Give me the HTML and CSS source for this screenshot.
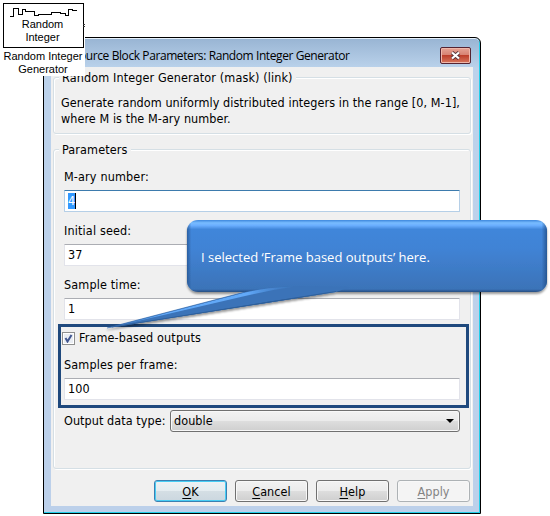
FILE: index.html
```
<!DOCTYPE html>
<html lang="en">
<head>
<meta charset="utf-8">
<title>Source Block Parameters</title>
<link rel="stylesheet" href="styles.css">
</head>
<body>
<main class="canvas">
  <section class="dialog">
    <header class="titlebar">
      <span class="title">ource Block Parameters: Random Integer Generator</span>
      <span class="close"><svg width="11" height="9" viewBox="0 0 11 9"><path d="M2 1.5 9 7.5M9 1.5 2 7.5" stroke="#53343a" stroke-width="3.8"/><path d="M2 1.5 9 7.5M9 1.5 2 7.5" stroke="#fff" stroke-width="2.2"/></svg></span>
    </header>
    <div class="client">
      <div class="group about">
        <span class="legend">Random Integer Generator (mask) (link)</span>
        <p>Generate random uniformly distributed integers in the range [0, M-1],<br>where M is the M-ary number.</p>
      </div>
      <div class="group params">
        <span class="legend">Parameters</span>
        <div class="label">M-ary number:</div>
        <div class="input focus"><span class="selected">4</span></div>
        <div class="label">Initial seed:</div>
        <div class="input">37</div>
        <div class="label">Sample time:</div>
        <div class="input">1</div>
        <div class="frame">
          <div class="check-row">
            <span class="check"><svg width="9" height="9" viewBox="0 0 9 9"><path d="M1.5 4 3.5 7.5 7.5 1" fill="none" stroke="#40558f" stroke-width="2"/></svg></span>
            <span>Frame-based outputs</span>
          </div>
          <div class="label">Samples per frame:</div>
          <div class="input">100</div>
        </div>
        <div class="type-row">
          <span class="type-label">Output data type:</span>
          <div class="select"><span>double</span><svg width="8" height="4" viewBox="0 0 8 4"><path d="M0 0H8L4 4Z"/></svg></div>
        </div>
      </div>
      <footer class="buttons">
        <div class="button default"><u>O</u>K</div>
        <div class="button"><u>C</u>ancel</div>
        <div class="button"><u>H</u>elp</div>
        <div class="button disabled"><u>A</u>pply</div>
      </footer>
    </div>
  </section>

  <aside class="block">
    <div class="icon">
      <svg width="69" height="10" viewBox="0 0 69 10"><path d="M0 8.500H3.500V.500H8.500V6.500H12.500V1.500H15.500V3.500H24.500V7.500H28.500V6.500H41.500V4.500H50.500V5.500H55V7.500H58.500V1.500H62.500V2.500H67" fill="none" stroke="#000" stroke-width="1" shape-rendering="crispEdges"/><path d="M0 8.500H4" stroke="#000"/></svg>
      <div>Random<br>Integer</div>
    </div>
    <div class="caption">Random Integer<br>Generator</div>
  </aside>
  <span class="port"></span>

  <div class="callout">
    <svg width="450" height="125" viewBox="0 0 450 125">
      <defs>
        <linearGradient id="face" x1="0" y1="0" x2="0" y2="1">
          <stop offset="0" stop-color="#3d87dc"/><stop offset=".04" stop-color="#78bcff"/><stop offset=".075" stop-color="#6aafff"/><stop offset=".13" stop-color="#4186da"/><stop offset=".4" stop-color="#4183d5"/><stop offset=".96" stop-color="#3b73b8"/><stop offset="1" stop-color="#274e82"/>
        </linearGradient>
        <linearGradient id="side" x1="0" x2="1" y1="0" y2="0">
          <stop offset="0" stop-color="#204d86" stop-opacity=".65"/><stop offset=".012" stop-color="#204d86" stop-opacity="0"/><stop offset=".985" stop-color="#204d86" stop-opacity="0"/><stop offset="1" stop-color="#204d86" stop-opacity=".8"/>
        </linearGradient>
        <linearGradient id="shine" gradientUnits="userSpaceOnUse" x1="7" y1="0" x2="194" y2="0">
          <stop offset="0" stop-color="#3f7cc2"/><stop offset=".3" stop-color="#62a9f8"/><stop offset=".75" stop-color="#62a9f8"/><stop offset="1" stop-color="#4180cc" stop-opacity=".2"/>
        </linearGradient>
        <filter id="soft" x="-5%" y="-20%" width="110%" height="140%"><feGaussianBlur stdDeviation=".5"/></filter>
        <filter id="shadow" x="-5%" y="-10%" width="110%" height="130%"><feDropShadow dx="0" dy="2" stdDeviation="1.3" flood-color="#000" flood-opacity=".4"/></filter>
      </defs>
      <g filter="url(#shadow)">
        <rect x="87" y="5" width="360" height="72" rx="11" fill="url(#face)"/>
        <rect x="87" y="5" width="360" height="72" rx="11" fill="url(#side)"/>
        <path d="M7 113 145 77 165 73 194 71 250 72 236 77Z" fill="#3b73b8"/>
        <path d="M12 112 143 78Q165 72.500 194 71.500Q170 75 145 81Z" fill="url(#shine)" filter="url(#soft)"/>
        <path d="M7 113 145 77" stroke="#3069ad" stroke-width=".7"/>
        <path d="M7 113 236 77 170 86.500Z" fill="#2b588f"/>
        <path d="M12 112 236 76.500" stroke="#2f609b" stroke-width="1"/>
      </g>
    </svg>
    <span class="message">I selected ‘Frame based outputs’ here.</span>
  </div>
</main>
</body>
</html>
```
FILE: styles.css
```
* { box-sizing: border-box; }
body { margin: 0; background: #fff; }
.canvas { position: relative; width: 550px; height: 516px; overflow: hidden; font: 12.5px/16px "DejaVu Sans Condensed", "DejaVu Sans", sans-serif; font-stretch: condensed; letter-spacing: .07px; color: #000; }
.canvas span { white-space: nowrap; }

.dialog { position: absolute; left: 43px; top: 37px; width: 438px; height: 477px; padding: 0 7px 7px; border: 1px solid #000; border-radius: 6px 6px 0 0; background: linear-gradient(#98b4d3, #b9d1ea 29px, #bcd2eb 30px, #bcd0ea); box-shadow: inset -1px -1px #22cfea, inset 0 1px #e6f1fb; }
.titlebar { height: 29px; display: flex; align-items: center; justify-content: space-between; padding: 0 2px 0 28px; }
.title { font: 12px/16px "Open Sans", sans-serif; letter-spacing: -.41px; padding-top: 6px; }
.close { width: 31px; height: 17px; display: flex; align-items: center; justify-content: center; margin-top: 6px; border: 1px solid #552331; border-radius: 2px; background: linear-gradient(#e5a395, #d88373 45%, #bd3f2b 50%, #d7775e); box-shadow: inset 0 0 0 1px #efb7aa; }
.client { height: 439px; background: #f0f0f0; padding: 10px 2px 0; }
.group { position: relative; border: 1px solid #d5dfe5; border-radius: 3px; box-shadow: inset 1px 1px #fff, 1px 1px #fff; }
.legend { position: absolute; left: 5px; top: -8px; padding: 0 3px; background: #f0f0f0; letter-spacing: .12px; }
.about { height: 57px; padding: 17px 7px 0; }
.about p { margin: 0; }
.params { height: 320px; margin-top: 15px; padding: 19px 10px 0; }
.label { height: 16px; letter-spacing: .15px; }
.input { height: 22px; margin: 5px 0 11px; padding: 2px 3px; border: 1px solid #e2e3ea; border-top-color: #abadb3; border-radius: 1px; background: #fff; }
.focus { border-color: #b5cfe7; border-top-color: #3d7bad; }
.selected { display: inline-block; height: 16px; background: #3399ff; color: #fff; border-right: 1px solid #000; }
.frame { height: 84px; margin: -7px -9px 0 -6px; padding: 3px 6px 0 1px; border: 3px solid #1f497d; }
.frame .label { margin: 11px 0 0 2px; }
.frame .input { margin: 5px 0 0 2px; }
.check-row { height: 16px; display: flex; align-items: center; gap: 4px; letter-spacing: .13px; }
.check { width: 13px; height: 13px; border: 1px solid #8e8f8f; background: #e9edf3; display: flex; align-items: center; justify-content: center; box-shadow: inset 0 0 0 1px #fff; }
.type-row { display: flex; margin-top: 2px; height: 22px; align-items: center; }
.type-label { width: 106px; }
.select { flex: 1; height: 22px; display: flex; align-items: center; justify-content: space-between; padding: 0 5px 0 3px; border: 1px solid #707070; border-radius: 3px; background: linear-gradient(#f2f2f2, #ebebeb 48%, #dddddd 52%, #cfcfcf); box-shadow: inset 0 0 0 1px #f8f8f8; }
.buttons { display: flex; gap: 8px; justify-content: flex-end; padding: 11px 1px 0; }
.button { width: 73px; height: 22px; text-align: center; line-height: 21px; border: 1px solid #707070; border-radius: 3px; background: linear-gradient(#f2f2f2, #ebebeb 48%, #dddddd 52%, #cfcfcf); box-shadow: inset 0 0 0 1px #f8f8f8; }
.button u { text-underline-offset: 2px; }
.default { border-color: #3c7fb1; background: linear-gradient(#eef2f4, #e4ecf0 48%, #d4dee4 52%, #cbd7df); box-shadow: inset 0 0 0 1px #48cdf4; }
.disabled { color: #838383; border-color: #adb2b5; background: #f4f4f4; }

.block { position: absolute; left: 0; top: 0; width: 85px; height: 76px; padding: 3px 0 0 3px; background: #fff; font: 11px/13px "Liberation Sans", sans-serif; letter-spacing: 0; text-align: center; }
.icon { width: 81px; height: 45px; border: 1px solid #000; padding-top: 4px; }
.icon svg { display: block; margin: 0 0 0 6px; }
.icon div { padding-right: 2px; }
.caption { margin: 2px 1px 0 -1px; white-space: nowrap; }
.port { position: absolute; left: 83px; top: 24px; width: 2px; height: 3px; border: solid #333; border-width: 1px 0; }

.callout { position: absolute; left: 100px; top: 215px; width: 450px; height: 125px; }
.callout svg { display: block; }
.message { position: absolute; left: 101px; top: 34px; color: #fff; font: 13px/16px "Open Sans", sans-serif; letter-spacing: 0; }
```
